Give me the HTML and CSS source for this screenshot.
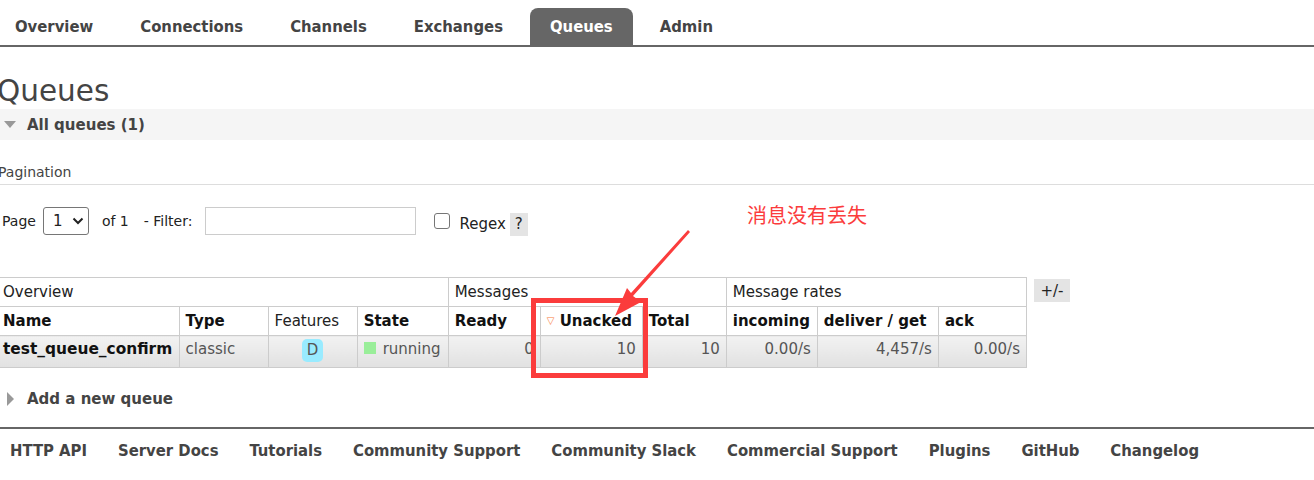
FILE: index.html
```html
<!DOCTYPE html>
<html>
<head>
<meta charset="utf-8">
<link rel="stylesheet" href="styles.css">
</head>
<body>
<div class="page">
  <nav class="tabs">
    <a class="tab">Overview</a>
    <a class="tab">Connections</a>
    <a class="tab">Channels</a>
    <a class="tab">Exchanges</a>
    <a class="tab active">Queues</a>
    <a class="tab">Admin</a>
  </nav>

  <main class="main">
    <h1 class="title">Queues</h1>
    <div class="section-head"><span class="tri-down"></span>All queues (1)</div>

    <h3 class="pag-title">Pagination</h3>
    <div class="filter-row">
      <span>Page</span>
      <span class="select">1 <svg width="12" height="8" viewBox="0 0 12 8"><path d="M1.5 1.5 L6 6 L10.5 1.5" fill="none" stroke="#222" stroke-width="2"/></svg></span>
      <span class="of">of 1</span>
      <span class="filt">- Filter:</span>
      <span class="input"></span>
      <span class="check"></span>
      <span class="regex">Regex</span>
      <span class="help">?</span>
    </div>

    <div class="table-wrap">
      <table class="queues">
        <colgroup>
          <col style="width:179px"><col style="width:89px"><col style="width:89px"><col style="width:91px">
          <col style="width:92px"><col style="width:102px"><col style="width:84px">
          <col style="width:91px"><col style="width:121px"><col style="width:88px">
        </colgroup>
        <thead>
          <tr class="group">
            <th colspan="4">Overview</th>
            <th colspan="3">Messages</th>
            <th colspan="3">Message rates</th>
          </tr>
          <tr class="cols">
            <th>Name</th><th>Type</th><th class="normal">Features</th><th>State</th>
            <th>Ready</th><th><span class="sort">&#9661;</span> Unacked</th><th>Total</th>
            <th>incoming</th><th>deliver / get</th><th>ack</th>
          </tr>
        </thead>
        <tbody>
          <tr>
            <td class="name">test_queue_confirm</td>
            <td>classic</td>
            <td class="c"><span class="badge">D</span></td>
            <td><span class="green"></span>running</td>
            <td class="r">0</td>
            <td class="r">10</td>
            <td class="r">10</td>
            <td class="r">0.00/s</td>
            <td class="r">4,457/s</td>
            <td class="r">0.00/s</td>
          </tr>
        </tbody>
      </table>
      <span class="plusminus">+/-</span>
    </div>

    <div class="add"><span class="tri-right"></span>Add a new queue</div>
  </main>

  <footer class="footer">
    <a>HTTP API</a>
    <a>Server Docs</a>
    <a>Tutorials</a>
    <a>Community Support</a>
    <a>Community Slack</a>
    <a>Commercial Support</a>
    <a>Plugins</a>
    <a>GitHub</a>
    <a>Changelog</a>
  </footer>

  <div class="note">消息没有丢失</div>
  <div class="redbox"></div>
  <svg class="arrow" width="120" height="100" viewBox="0 0 120 100">
    <polygon points="73,2 75,4 18,68 26,74 0,88 12,60 16,65" fill="#fb3c3c"/>
  </svg>
</div>
</body>
</html>
```

FILE: styles.css
```css
* { box-sizing: border-box; }
html, body { margin: 0; padding: 0; background: #fff; }
body {
  font-family: "DejaVu Sans", Verdana, sans-serif;
  font-size: 14px;
  color: #444;
  width: 1314px;
  height: 480px;
  overflow: hidden;
}
.page { position: relative; width: 1314px; height: 480px; }

.tabs {
  display: flex;
  gap: 7px;
  margin-left: -5px;
  padding-top: 8px;
  border-bottom: 2px solid #666;
  height: 47px;
}
.tab {
  font-family: "DejaVu Sans Condensed", "DejaVu Sans", sans-serif;
  font-stretch: condensed;
  font-weight: bold;
  font-size: 16.5px;
  color: #444;
  padding: 0 20px;
  height: 37px;
  line-height: 38px;
  border-radius: 8px 8px 0 0;
}
.tab.active { background: #666; color: #fff; }

.main { padding: 0; }
.title {
  font-weight: normal;
  font-size: 29.5px;
  color: #444;
  margin: 26px 0 0 -3px;
  line-height: 36px;
  height: 36px;
}
.section-head {
  background: #f5f5f5;
  height: 31px;
  display: flex;
  align-items: center;
  font-weight: bold;
  font-size: 15px;
  color: #444;
  padding-left: 4px;
}
.tri-down {
  width: 0; height: 0;
  border-left: 6px solid transparent;
  border-right: 6px solid transparent;
  border-top: 7px solid #999;
  margin-right: 11px;
}
.pag-title {
  font-weight: normal;
  font-size: 14px;
  color: #444;
  margin: 23px 0 0 -2px;
  padding-bottom: 3px;
  border-bottom: 1px solid #ddd;
  line-height: 18px;
}
.filter-row {
  display: flex;
  align-items: center;
  margin-top: 22px;
  height: 28px;
  font-size: 14px;
  color: #222;
  padding-left: 2px;
}
.select {
  display: inline-flex;
  align-items: center;
  gap: 10px;
  width: 46px;
  height: 28px;
  border: 1px solid #767676;
  border-radius: 3px;
  margin-left: 7px;
  padding-left: 9px;
  font-size: 15px;
}
.of { margin-left: 13px; }
.filt { margin-left: 15px; }
.input {
  width: 211px;
  height: 28px;
  border: 1px solid #ccc;
  margin-left: 13px;
}
.check {
  width: 16px; height: 16px;
  border: 1px solid #767676;
  border-radius: 3px;
  margin-left: 18px;
}
.regex { margin-left: 9px; margin-top: 6px; font-size: 15px; }
.help {
  margin-left: 4px;
  margin-top: 6px;
  background: #e4e4e4;
  width: 18px;
  height: 23px;
  display: inline-flex;
  align-items: center;
  justify-content: center;
  font-size: 15px;
}

.table-wrap {
  margin-top: 42px;
  display: flex;
  align-items: flex-start;
  gap: 7px;
}
.queues {
  border-collapse: collapse;
  table-layout: fixed;
  width: 1027px;
  font-size: 15px;
}
.queues th, .queues td {
  border: 1px solid #ccc;
  padding: 0 3px;
  text-align: left;
  white-space: nowrap;
  overflow: hidden;
}
.queues tr.group th { font-weight: normal; color: #222; height: 29px; padding-left: 6px; }
.queues tr.group th:first-child { padding-left: 3px; border-left: none; }
.queues tr.cols th { font-weight: bold; color: #111; height: 29px; padding-left: 6px; }
.queues tr.cols th:first-child { padding-left: 3px; border-left: none; }
.queues tr.cols th.normal { font-weight: normal; color: #222; }
.queues tbody td {
  height: 32px;
  color: #555;
  background: linear-gradient(#f2f2f2, #e1e1e1);
  padding: 3px 6px 0 6px;
  vertical-align: top;
  line-height: 20px;
}
.queues tbody td:first-child { border-left: none; padding-left: 3px; }
.queues td.name { font-weight: bold; color: #111; font-size: 15.4px; }
.queues td.r { text-align: right; }
.queues td.c { text-align: center; }
.sort { color: #f87c3c; font-size: 10px; vertical-align: 2px; }
.badge {
  display: inline-block;
  background: #99ebff;
  color: #555;
  width: 21px;
  height: 23px;
  line-height: 23px;
  border-radius: 5px;
  text-align: center;
  margin-top: 0;
}
.green {
  display: inline-block;
  width: 12px; height: 12px;
  background: #99ee99;
  margin-right: 7px;
}
.plusminus {
  margin-top: 2px;
  background: #e4e4e4;
  width: 36px;
  height: 23px;
  display: inline-flex;
  align-items: center;
  justify-content: center;
  font-size: 15px;
  color: #222;
}

.add {
  display: flex;
  align-items: center;
  margin-top: 20px;
  height: 22px;
  font-weight: bold;
  font-size: 15px;
  color: #444;
  padding-left: 7px;
}
.tri-right {
  width: 0; height: 0;
  border-top: 7px solid transparent;
  border-bottom: 7px solid transparent;
  border-left: 7px solid #999;
  margin-right: 13px;
}

.footer {
  margin-top: 17px;
  border-top: 2px solid #666;
  display: flex;
  gap: 31px;
  padding: 12px 0 0 10px;
}
.footer a {
  font-family: "DejaVu Sans Condensed", "DejaVu Sans", sans-serif;
  font-stretch: condensed;
  font-weight: bold;
  font-size: 16.5px;
  color: #444;
}

.note {
  position: absolute;
  left: 747px;
  top: 203px;
  font-family: "Noto Sans CJK SC", sans-serif;
  font-size: 20px;
  color: #fb3c3c;
  line-height: 24px;
}
.redbox {
  position: absolute;
  left: 531px;
  top: 298px;
  width: 117px;
  height: 80px;
  border: 5px solid #fb3c3c;
}
.arrow {
  position: absolute;
  left: 615px;
  top: 228px;
}
```
